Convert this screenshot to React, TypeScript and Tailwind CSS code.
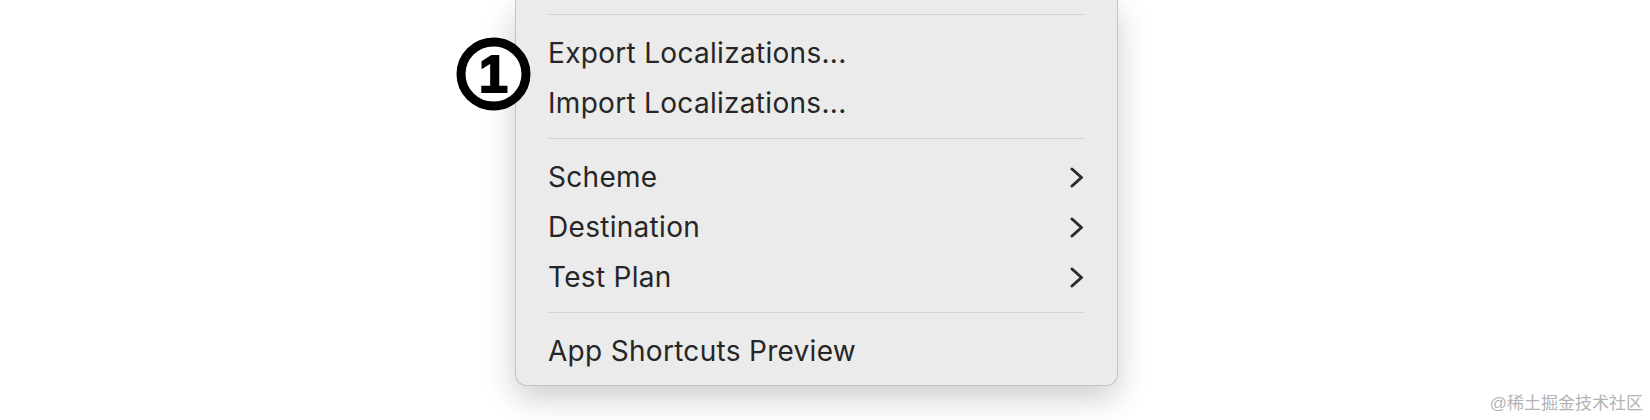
import React from "react";

const font = { fontFamily: "Inter, 'Noto Sans', sans-serif" };

function Chevron() {
  return (
    <svg width="14" height="21" viewBox="0 0 14 21" className="shrink-0">
      <polyline points="2,2 11.5,10.5 2,19" fill="none" stroke="#2b2b2b" strokeWidth="3" strokeLinecap="round" strokeLinejoin="round" />
    </svg>
  );
}

function Sep() {
  return (
    <div className="pt-[10px] pb-[13px]">
      <div className="h-px bg-[#d3d3d3]" />
    </div>
  );
}

function Item({ label, sub }: { label: string; sub?: boolean }) {
  return (
    <div className="h-[50px] flex items-center justify-between">
      <span className="text-[28px] leading-none text-[#262626] tracking-[0.3px]">{label}</span>
      {sub && <div className="mr-[1px]"><Chevron /></div>}
    </div>
  );
}

export default function App() {
  return (
    <div className="relative w-[1650px] h-[420px] bg-white overflow-hidden" style={font}>
      <div className="ml-[515px] w-[603px] bg-[#ebebeb] border border-t-0 border-[#c4c4c4] rounded-b-[12px] shadow-[0_12px_32px_rgba(0,0,0,0.2)] pl-[32px] pr-[32px] pt-[4px] pb-[9px]">
        <Sep />
        <Item label="Export Localizations..." />
        <Item label="Import Localizations..." />
        <Sep />
        <Item label="Scheme" sub />
        <Item label="Destination" sub />
        <Item label="Test Plan" sub />
        <Sep />
        <Item label="App Shortcuts Preview" />
      </div>

      <div className="absolute left-[456px] top-[37px] w-[75px] h-[74px] flex items-center justify-center">
        <svg width="75" height="74" viewBox="0 0 75 74" className="absolute inset-0">
          <ellipse cx="37.5" cy="37" rx="32.5" ry="32" fill="white" stroke="black" strokeWidth="9" />
        </svg>
        <span
          className="relative text-[52px] font-bold leading-none text-black"
          style={{ fontFamily: "'Liberation Sans', Arial, sans-serif", WebkitTextStroke: "2px black" }}
        >
          1
        </span>
      </div>

      <div
        className="absolute right-[7px] bottom-[8px] text-[17px] leading-none text-[#b3b3b3]"
        style={{ fontFamily: "'Liberation Sans', 'Noto Sans CJK SC', sans-serif" }}
      >
        @稀土掘金技术社区
      </div>
    </div>
  );
}
